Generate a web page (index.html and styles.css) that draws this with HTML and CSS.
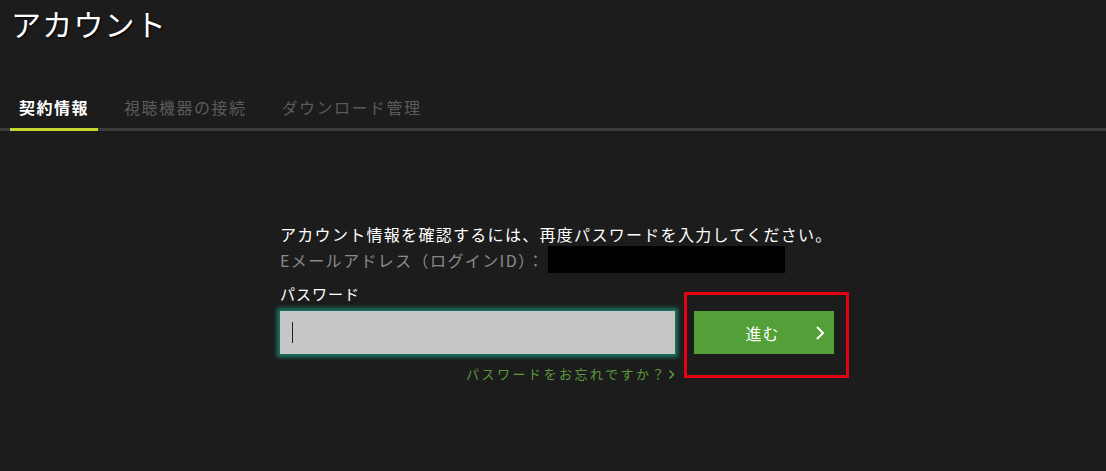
FILE: index.html
```html
<!DOCTYPE html>
<html lang="ja">
<head>
    <meta charset="UTF-8">
    <meta name="viewport" content="width=device-width, initial-scale=1.0">
    <title>アカウント</title>
    <link rel="stylesheet" href="styles.css">
</head>
<body>

<header class="page-header">
    <h1 class="page-title">アカウント</h1>
    <nav class="tabs">
        <a class="tab active" href="#">契約情報</a>
        <a class="tab" href="#">視聴機器の接続</a>
        <a class="tab" href="#">ダウンロード管理</a>
    </nav>
</header>

<main class="content">
    <div class="confirm">
        <p class="message">アカウント情報を確認するには、再度パスワードを入力してください。</p>
        <p class="email">Eメールアドレス（ログインID）：<span class="masked"></span></p>

        <div class="form-row">
            <div class="field">
                <label class="label" for="password">パスワード</label>
                <div class="input-box">
                    <span class="caret"></span>
                </div>
                <a class="forgot" href="#">パスワードをお忘れですか？<svg class="forgot-arrow" width="7" height="11" viewBox="0 0 7 11"><path d="M1.5 1.5 L5.5 5.5 L1.5 9.5" fill="none" stroke="#5d9a3d" stroke-width="1.6"/></svg></a>
            </div>
            <div class="highlight">
                <button class="next" type="button">
                    <span class="next-label">進む</span>
                    <svg class="chevron" width="10" height="16" viewBox="0 0 10 16">
                        <path d="M2 2 L8 8 L2 14" fill="none" stroke="#fff" stroke-width="2"/>
                    </svg>
                </button>
            </div>
        </div>
    </div>
</main>

</body>
</html>
```

FILE: styles.css
```css
body {
    margin: 0;
    background-color: #1c1c1c;
    font-family: "Noto Sans CJK JP", "Noto Sans", sans-serif;
    color: #fff;
}

.page-header {
    padding-top: 3px;
}

.page-title {
    margin: 0 0 0 11px;
    font-size: 30px;
    line-height: 40px;
    font-weight: 400;
    letter-spacing: 1.2px;
    text-shadow: 1px 1px 2px #000;
}

.tabs {
    display: flex;
    gap: 17px;
    margin-top: 52px;
    padding-left: 10px;
    border-bottom: 3px solid #3b3b3b;
}

.tab {
    padding: 0 9px 9px;
    font-size: 16px;
    line-height: 24px;
    letter-spacing: 1.5px;
    color: #5b5b5b;
    text-decoration: none;
    border-bottom: 3px solid transparent;
    margin-bottom: -3px;
}

.tab.active {
    color: #fff;
    font-weight: 700;
    border-bottom-color: #c9d52f;
}

.content {
    padding-top: 91px;
    padding-left: 280px;
}

.message {
    margin: 0;
    font-size: 16px;
    line-height: 24px;
    letter-spacing: 1.3px;
}

.email {
    display: flex;
    align-items: center;
    margin: 0;
    font-size: 16px;
    line-height: 24px;
    letter-spacing: 1.4px;
    color: #8a8a8a;
}

.masked {
    display: inline-block;
    width: 237px;
    height: 27px;
    margin-left: 3px;
    background-color: #000;
}

.form-row {
    display: flex;
    align-items: flex-start;
    gap: 9px;
    margin-top: 11px;
}

.field {
    display: flex;
    flex-direction: column;
    width: 395px;
}

.label {
    font-size: 15px;
    line-height: 20px;
    letter-spacing: 1px;
    margin-bottom: 7px;
}

.input-box {
    display: flex;
    align-items: center;
    height: 43px;
    padding-left: 12px;
    background-color: #c6c6c6;
    box-shadow: 0 0 4px 3px #1a7864;
}

.caret {
    width: 1px;
    height: 21px;
    background-color: #222;
}

.forgot {
    display: flex;
    align-items: center;
    align-self: flex-end;
    margin-top: 11px;
    font-size: 13px;
    line-height: 18px;
    letter-spacing: 2.5px;
    color: #5d9a3d;
    text-decoration: none;
}

.forgot-arrow {
    margin-left: 1px;
}

.highlight {
    margin-top: 8px;
    padding: 16px 12px 21px 7px;
    border: 3px solid #e60012;
}

.next {
    display: flex;
    align-items: center;
    justify-content: center;
    position: relative;
    width: 140px;
    height: 43px;
    border: none;
    background-color: #52a037;
    color: #fff;
    font-family: inherit;
    font-size: 16px;
    letter-spacing: 1px;
    cursor: pointer;
}

.next-label {
    margin-left: -3px;
}

.chevron {
    position: absolute;
    right: 9px;
    top: 14px;
}
```
